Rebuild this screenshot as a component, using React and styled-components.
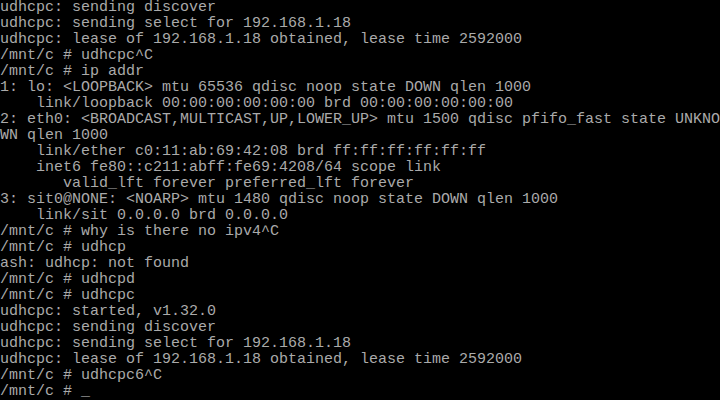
import styled, { createGlobalStyle } from "styled-components";

const GlobalStyle = createGlobalStyle`
  html, body {
    margin: 0;
    padding: 0;
    background: #000;
  }
`;

const lines = [
  "udhcpc: sending discover",
  "udhcpc: sending select for 192.168.1.18",
  "udhcpc: lease of 192.168.1.18 obtained, lease time 2592000",
  "/mnt/c # udhcpc^C",
  "/mnt/c # ip addr",
  "1: lo: <LOOPBACK> mtu 65536 qdisc noop state DOWN qlen 1000",
  "    link/loopback 00:00:00:00:00:00 brd 00:00:00:00:00:00",
  "2: eth0: <BROADCAST,MULTICAST,UP,LOWER_UP> mtu 1500 qdisc pfifo_fast state UNKNO",
  "WN qlen 1000",
  "    link/ether c0:11:ab:69:42:08 brd ff:ff:ff:ff:ff:ff",
  "    inet6 fe80::c211:abff:fe69:4208/64 scope link",
  "       valid_lft forever preferred_lft forever",
  "3: sit0@NONE: <NOARP> mtu 1480 qdisc noop state DOWN qlen 1000",
  "    link/sit 0.0.0.0 brd 0.0.0.0",
  "/mnt/c # why is there no ipv4^C",
  "/mnt/c # udhcp",
  "ash: udhcp: not found",
  "/mnt/c # udhcpd",
  "/mnt/c # udhcpc",
  "udhcpc: started, v1.32.0",
  "udhcpc: sending discover",
  "udhcpc: sending select for 192.168.1.18",
  "udhcpc: lease of 192.168.1.18 obtained, lease time 2592000",
  "/mnt/c # udhcpc6^C",
];

export default function App() {
  return (
    <>
      <GlobalStyle />
      <Screen>
        {lines.map((l, i) => (
          <Line key={i}>{l}</Line>
        ))}
        <Line>
          /mnt/c # <Cursor>_</Cursor>
        </Line>
      </Screen>
    </>
  );
}

const Screen = styled.div`
  width: 720px;
  height: 400px;
  overflow: hidden;
  background: #000;
  color: #aaaaaa;
  font-family: "Liberation Mono", "DejaVu Sans Mono", monospace;
  font-size: 15px;
  line-height: 16px;
  display: flex;
  flex-direction: column;
`;

const Line = styled.div`
  height: 16px;
  white-space: pre;
`;

const Cursor = styled.span`
  color: #c8c8c8;
`;
